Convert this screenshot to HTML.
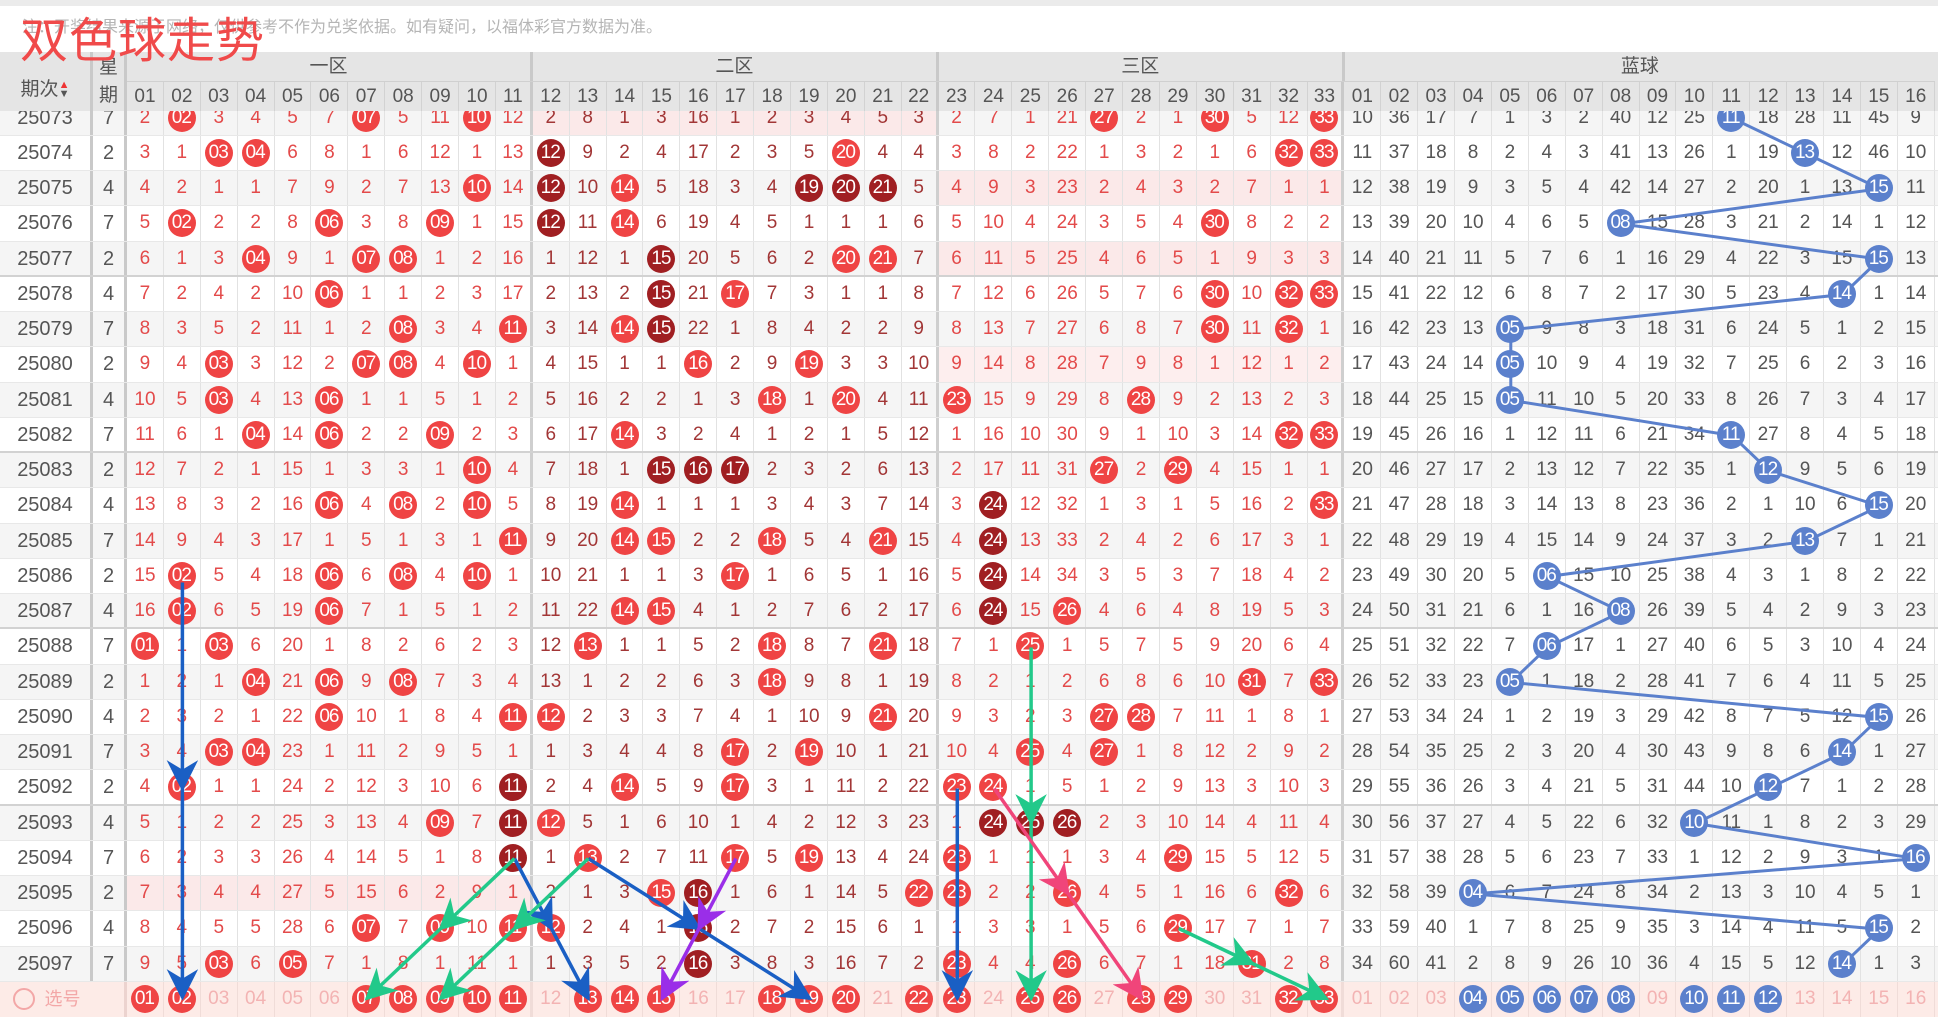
<!DOCTYPE html>
<html><head><meta charset="utf-8">
<style>
*{box-sizing:border-box;margin:0;padding:0}
body{width:1938px;height:1020px;overflow:hidden;position:relative;background:#fff;font-family:"Liberation Sans","Noto Sans CJK SC",sans-serif}
.topbar{position:absolute;left:0;top:0;width:1938px;height:6px;background:#ebebeb}
.note{position:absolute;left:22px;top:8px;height:46px;line-height:40px;font-size:16px;color:#b5b5b5;white-space:nowrap}
.title{position:absolute;left:20px;top:13px;font-size:48px;color:#f04a4a;z-index:20;letter-spacing:1px;font-family:"Liberation Sans","Noto Sans CJK SC",sans-serif;line-height:58px}
.hd{position:absolute;left:0;top:52px;width:1938px;height:59px;background:#e5e5e5;z-index:10;color:#555}
.hd .qc{position:absolute;left:0;top:0;width:93px;height:59px;border-right:3px solid #c9c9c9;text-align:center;line-height:59px;font-size:19px;padding-top:8px}
.hd .qc em{font-style:normal;font-size:11px;line-height:9px;display:inline-block;vertical-align:middle;text-align:center}
.hd .xq{position:absolute;left:93px;top:0;width:34px;height:59px;border-right:3px solid #c9c9c9;text-align:center;font-size:19px;line-height:28px;padding-top:2px}
.hd .zr{position:absolute;left:127px;top:0;height:30px;display:flex;border-bottom:1px solid #d0d0d0}
.hd .zr div{text-align:center;line-height:30px;font-size:19px;border-right:3px solid #c9c9c9}
.hd .nr{position:absolute;left:127px;top:30px;height:29px;display:flex}
.hd .nr span{flex:none;width:36.9px;text-align:center;line-height:29px;font-size:19px;border-right:1px solid #d2d2d2}
.hd .nr span:nth-child(11),.hd .nr span:nth-child(22),.hd .nr span:nth-child(33){border-right:3px solid #c9c9c9}
.rows{position:absolute;left:0;top:100.6px;width:1938px}
.r{display:flex;height:35.26px;background:#fff;border-bottom:1px solid #e8e8e8}
.r.g{background:#f5f5f5}
.r.sep{border-bottom:2px solid #d2d2d2}
.r b,.r s,.r i{flex:none;text-align:center;line-height:34px;font-weight:normal;font-style:normal;text-decoration:none;white-space:nowrap}
.r b{width:93px;font-size:20px;color:#555;border-right:3px solid #c9c9c9}
.r s{width:34px;font-size:20px;color:#555;border-right:3px solid #c9c9c9}
.r i{width:36.9px;font-size:19px;color:#e34a4a;border-right:1px solid #e2e2e2}
.r i:nth-of-type(n+12):nth-of-type(-n+22){color:#a23636}
.r i:nth-of-type(n+34){color:#555}
.r i:nth-of-type(11),.r i:nth-of-type(22),.r i:nth-of-type(33){border-right:3px solid #cfcfcf}
.p1 i:nth-of-type(-n+11),.p2 i:nth-of-type(n+12):nth-of-type(-n+22),.p3 i:nth-of-type(n+23):nth-of-type(-n+33){background:#fdeeee}
.g.p1 i:nth-of-type(-n+11),.g.p2 i:nth-of-type(n+12):nth-of-type(-n+22),.g.p3 i:nth-of-type(n+23):nth-of-type(-n+33){background:#fbe9e9}
u{display:inline-block;width:28px;height:28px;border-radius:50%;background:#ef4444;color:#fff;line-height:28px;font-size:19px;letter-spacing:-1px;text-decoration:none;position:relative;z-index:2;vertical-align:middle;text-indent:-1px}
u.d{background:#a01f22}
u.b{background:#5b80cc}
.last{background:#fdebe7!important;border-bottom:none}
.last i{color:#f3b3b3!important;border-right-color:#f0dcd8!important}
.last b{color:#f3a7a7;font-size:18px;border-right:none}
.last b span{display:inline-block;width:22px;height:22px;border:2px solid #f3a7a7;border-radius:50%;vertical-align:middle;margin-right:10px;margin-top:-3px}
.last s{border-right:3px solid #ecd3cf}
svg{position:absolute;left:0;top:0}
</style></head><body>
<div class="topbar"></div>
<div class="note">注：开奖结果来源于网络，仅供参考不作为兑奖依据。如有疑问，以福体彩官方数据为准。</div>
<div class="title">双色球走势</div>
<div class="hd">
<div class="qc">期次<em><span style="color:#e33">▲</span><br>▼</em></div>
<div class="xq">星<br>期</div>
<div class="zr"><div style="width:405.9px">一区</div><div style="width:405.9px">二区</div><div style="width:405.9px">三区</div><div style="width:590.4px;border-right:none">蓝球</div></div>
<div class="nr"><span>01</span><span>02</span><span>03</span><span>04</span><span>05</span><span>06</span><span>07</span><span>08</span><span>09</span><span>10</span><span>11</span><span>12</span><span>13</span><span>14</span><span>15</span><span>16</span><span>17</span><span>18</span><span>19</span><span>20</span><span>21</span><span>22</span><span>23</span><span>24</span><span>25</span><span>26</span><span>27</span><span>28</span><span>29</span><span>30</span><span>31</span><span>32</span><span>33</span><span>01</span><span>02</span><span>03</span><span>04</span><span>05</span><span>06</span><span>07</span><span>08</span><span>09</span><span>10</span><span>11</span><span>12</span><span>13</span><span>14</span><span>15</span><span>16</span></div>
</div>

<svg width="1938" height="1020" style="z-index:1">
<polyline transform="translate(0,2.5)" fill="none" stroke="#5b80cc" stroke-width="3" points="1732.2,115.7 1806,151 1879.8,186.2 1621.5,221.5 1879.8,256.7 1842.9,292 1510.8,327.3 1510.8,362.5 1510.8,397.8 1732.2,433 1769.1,468.3 1879.8,503.6 1806,538.8 1547.7,574.1 1621.5,609.3 1547.7,644.6 1510.8,679.9 1879.8,715.1 1842.9,750.4 1769.1,785.6 1695.3,820.9 1916.7,856.2 1473.9,891.4 1879.8,926.7 1842.9,961.9"/>
</svg>

<div class="rows">
<div class="r g p2"><b>25073</b><s>7</s><i>2</i><i><u>02</u></i><i>3</i><i>4</i><i>5</i><i>7</i><i><u>07</u></i><i>5</i><i>11</i><i><u>10</u></i><i>12</i><i>2</i><i>8</i><i>1</i><i>3</i><i>16</i><i>1</i><i>2</i><i>3</i><i>4</i><i>5</i><i>3</i><i>2</i><i>7</i><i>1</i><i>21</i><i><u>27</u></i><i>2</i><i>1</i><i><u>30</u></i><i>5</i><i>12</i><i><u>33</u></i><i>10</i><i>36</i><i>17</i><i>7</i><i>1</i><i>3</i><i>2</i><i>40</i><i>12</i><i>25</i><i><u class=b>11</u></i><i>18</i><i>28</i><i>11</i><i>45</i><i>9</i></div>
<div class="r"><b>25074</b><s>2</s><i>3</i><i>1</i><i><u>03</u></i><i><u>04</u></i><i>6</i><i>8</i><i>1</i><i>6</i><i>12</i><i>1</i><i>13</i><i><u class=d>12</u></i><i>9</i><i>2</i><i>4</i><i>17</i><i>2</i><i>3</i><i>5</i><i><u>20</u></i><i>4</i><i>4</i><i>3</i><i>8</i><i>2</i><i>22</i><i>1</i><i>3</i><i>2</i><i>1</i><i>6</i><i><u>32</u></i><i><u>33</u></i><i>11</i><i>37</i><i>18</i><i>8</i><i>2</i><i>4</i><i>3</i><i>41</i><i>13</i><i>26</i><i>1</i><i>19</i><i><u class=b>13</u></i><i>12</i><i>46</i><i>10</i></div>
<div class="r g p3"><b>25075</b><s>4</s><i>4</i><i>2</i><i>1</i><i>1</i><i>7</i><i>9</i><i>2</i><i>7</i><i>13</i><i><u>10</u></i><i>14</i><i><u class=d>12</u></i><i>10</i><i><u>14</u></i><i>5</i><i>18</i><i>3</i><i>4</i><i><u class=d>19</u></i><i><u class=d>20</u></i><i><u class=d>21</u></i><i>5</i><i>4</i><i>9</i><i>3</i><i>23</i><i>2</i><i>4</i><i>3</i><i>2</i><i>7</i><i>1</i><i>1</i><i>12</i><i>38</i><i>19</i><i>9</i><i>3</i><i>5</i><i>4</i><i>42</i><i>14</i><i>27</i><i>2</i><i>20</i><i>1</i><i>13</i><i><u class=b>15</u></i><i>11</i></div>
<div class="r"><b>25076</b><s>7</s><i>5</i><i><u>02</u></i><i>2</i><i>2</i><i>8</i><i><u>06</u></i><i>3</i><i>8</i><i><u>09</u></i><i>1</i><i>15</i><i><u class=d>12</u></i><i>11</i><i><u>14</u></i><i>6</i><i>19</i><i>4</i><i>5</i><i>1</i><i>1</i><i>1</i><i>6</i><i>5</i><i>10</i><i>4</i><i>24</i><i>3</i><i>5</i><i>4</i><i><u>30</u></i><i>8</i><i>2</i><i>2</i><i>13</i><i>39</i><i>20</i><i>10</i><i>4</i><i>6</i><i>5</i><i><u class=b>08</u></i><i>15</i><i>28</i><i>3</i><i>21</i><i>2</i><i>14</i><i>1</i><i>12</i></div>
<div class="r g p3 sep"><b>25077</b><s>2</s><i>6</i><i>1</i><i>3</i><i><u>04</u></i><i>9</i><i>1</i><i><u>07</u></i><i><u>08</u></i><i>1</i><i>2</i><i>16</i><i>1</i><i>12</i><i>1</i><i><u class=d>15</u></i><i>20</i><i>5</i><i>6</i><i>2</i><i><u>20</u></i><i><u>21</u></i><i>7</i><i>6</i><i>11</i><i>5</i><i>25</i><i>4</i><i>6</i><i>5</i><i>1</i><i>9</i><i>3</i><i>3</i><i>14</i><i>40</i><i>21</i><i>11</i><i>5</i><i>7</i><i>6</i><i>1</i><i>16</i><i>29</i><i>4</i><i>22</i><i>3</i><i>15</i><i><u class=b>15</u></i><i>13</i></div>
<div class="r"><b>25078</b><s>4</s><i>7</i><i>2</i><i>4</i><i>2</i><i>10</i><i><u>06</u></i><i>1</i><i>1</i><i>2</i><i>3</i><i>17</i><i>2</i><i>13</i><i>2</i><i><u class=d>15</u></i><i>21</i><i><u>17</u></i><i>7</i><i>3</i><i>1</i><i>1</i><i>8</i><i>7</i><i>12</i><i>6</i><i>26</i><i>5</i><i>7</i><i>6</i><i><u>30</u></i><i>10</i><i><u>32</u></i><i><u>33</u></i><i>15</i><i>41</i><i>22</i><i>12</i><i>6</i><i>8</i><i>7</i><i>2</i><i>17</i><i>30</i><i>5</i><i>23</i><i>4</i><i><u class=b>14</u></i><i>1</i><i>14</i></div>
<div class="r g"><b>25079</b><s>7</s><i>8</i><i>3</i><i>5</i><i>2</i><i>11</i><i>1</i><i>2</i><i><u>08</u></i><i>3</i><i>4</i><i><u>11</u></i><i>3</i><i>14</i><i><u>14</u></i><i><u class=d>15</u></i><i>22</i><i>1</i><i>8</i><i>4</i><i>2</i><i>2</i><i>9</i><i>8</i><i>13</i><i>7</i><i>27</i><i>6</i><i>8</i><i>7</i><i><u>30</u></i><i>11</i><i><u>32</u></i><i>1</i><i>16</i><i>42</i><i>23</i><i>13</i><i><u class=b>05</u></i><i>9</i><i>8</i><i>3</i><i>18</i><i>31</i><i>6</i><i>24</i><i>5</i><i>1</i><i>2</i><i>15</i></div>
<div class="r p3"><b>25080</b><s>2</s><i>9</i><i>4</i><i><u>03</u></i><i>3</i><i>12</i><i>2</i><i><u>07</u></i><i><u>08</u></i><i>4</i><i><u>10</u></i><i>1</i><i>4</i><i>15</i><i>1</i><i>1</i><i><u>16</u></i><i>2</i><i>9</i><i><u>19</u></i><i>3</i><i>3</i><i>10</i><i>9</i><i>14</i><i>8</i><i>28</i><i>7</i><i>9</i><i>8</i><i>1</i><i>12</i><i>1</i><i>2</i><i>17</i><i>43</i><i>24</i><i>14</i><i><u class=b>05</u></i><i>10</i><i>9</i><i>4</i><i>19</i><i>32</i><i>7</i><i>25</i><i>6</i><i>2</i><i>3</i><i>16</i></div>
<div class="r g"><b>25081</b><s>4</s><i>10</i><i>5</i><i><u>03</u></i><i>4</i><i>13</i><i><u>06</u></i><i>1</i><i>1</i><i>5</i><i>1</i><i>2</i><i>5</i><i>16</i><i>2</i><i>2</i><i>1</i><i>3</i><i><u>18</u></i><i>1</i><i><u>20</u></i><i>4</i><i>11</i><i><u>23</u></i><i>15</i><i>9</i><i>29</i><i>8</i><i><u>28</u></i><i>9</i><i>2</i><i>13</i><i>2</i><i>3</i><i>18</i><i>44</i><i>25</i><i>15</i><i><u class=b>05</u></i><i>11</i><i>10</i><i>5</i><i>20</i><i>33</i><i>8</i><i>26</i><i>7</i><i>3</i><i>4</i><i>17</i></div>
<div class="r sep"><b>25082</b><s>7</s><i>11</i><i>6</i><i>1</i><i><u>04</u></i><i>14</i><i><u>06</u></i><i>2</i><i>2</i><i><u>09</u></i><i>2</i><i>3</i><i>6</i><i>17</i><i><u>14</u></i><i>3</i><i>2</i><i>4</i><i>1</i><i>2</i><i>1</i><i>5</i><i>12</i><i>1</i><i>16</i><i>10</i><i>30</i><i>9</i><i>1</i><i>10</i><i>3</i><i>14</i><i><u>32</u></i><i><u>33</u></i><i>19</i><i>45</i><i>26</i><i>16</i><i>1</i><i>12</i><i>11</i><i>6</i><i>21</i><i>34</i><i><u class=b>11</u></i><i>27</i><i>8</i><i>4</i><i>5</i><i>18</i></div>
<div class="r g"><b>25083</b><s>2</s><i>12</i><i>7</i><i>2</i><i>1</i><i>15</i><i>1</i><i>3</i><i>3</i><i>1</i><i><u>10</u></i><i>4</i><i>7</i><i>18</i><i>1</i><i><u class=d>15</u></i><i><u class=d>16</u></i><i><u class=d>17</u></i><i>2</i><i>3</i><i>2</i><i>6</i><i>13</i><i>2</i><i>17</i><i>11</i><i>31</i><i><u>27</u></i><i>2</i><i><u>29</u></i><i>4</i><i>15</i><i>1</i><i>1</i><i>20</i><i>46</i><i>27</i><i>17</i><i>2</i><i>13</i><i>12</i><i>7</i><i>22</i><i>35</i><i>1</i><i><u class=b>12</u></i><i>9</i><i>5</i><i>6</i><i>19</i></div>
<div class="r"><b>25084</b><s>4</s><i>13</i><i>8</i><i>3</i><i>2</i><i>16</i><i><u>06</u></i><i>4</i><i><u>08</u></i><i>2</i><i><u>10</u></i><i>5</i><i>8</i><i>19</i><i><u>14</u></i><i>1</i><i>1</i><i>1</i><i>3</i><i>4</i><i>3</i><i>7</i><i>14</i><i>3</i><i><u class=d>24</u></i><i>12</i><i>32</i><i>1</i><i>3</i><i>1</i><i>5</i><i>16</i><i>2</i><i><u>33</u></i><i>21</i><i>47</i><i>28</i><i>18</i><i>3</i><i>14</i><i>13</i><i>8</i><i>23</i><i>36</i><i>2</i><i>1</i><i>10</i><i>6</i><i><u class=b>15</u></i><i>20</i></div>
<div class="r g"><b>25085</b><s>7</s><i>14</i><i>9</i><i>4</i><i>3</i><i>17</i><i>1</i><i>5</i><i>1</i><i>3</i><i>1</i><i><u>11</u></i><i>9</i><i>20</i><i><u>14</u></i><i><u>15</u></i><i>2</i><i>2</i><i><u>18</u></i><i>5</i><i>4</i><i><u>21</u></i><i>15</i><i>4</i><i><u class=d>24</u></i><i>13</i><i>33</i><i>2</i><i>4</i><i>2</i><i>6</i><i>17</i><i>3</i><i>1</i><i>22</i><i>48</i><i>29</i><i>19</i><i>4</i><i>15</i><i>14</i><i>9</i><i>24</i><i>37</i><i>3</i><i>2</i><i><u class=b>13</u></i><i>7</i><i>1</i><i>21</i></div>
<div class="r"><b>25086</b><s>2</s><i>15</i><i><u>02</u></i><i>5</i><i>4</i><i>18</i><i><u>06</u></i><i>6</i><i><u>08</u></i><i>4</i><i><u>10</u></i><i>1</i><i>10</i><i>21</i><i>1</i><i>1</i><i>3</i><i><u>17</u></i><i>1</i><i>6</i><i>5</i><i>1</i><i>16</i><i>5</i><i><u class=d>24</u></i><i>14</i><i>34</i><i>3</i><i>5</i><i>3</i><i>7</i><i>18</i><i>4</i><i>2</i><i>23</i><i>49</i><i>30</i><i>20</i><i>5</i><i><u class=b>06</u></i><i>15</i><i>10</i><i>25</i><i>38</i><i>4</i><i>3</i><i>1</i><i>8</i><i>2</i><i>22</i></div>
<div class="r g sep"><b>25087</b><s>4</s><i>16</i><i><u>02</u></i><i>6</i><i>5</i><i>19</i><i><u>06</u></i><i>7</i><i>1</i><i>5</i><i>1</i><i>2</i><i>11</i><i>22</i><i><u>14</u></i><i><u>15</u></i><i>4</i><i>1</i><i>2</i><i>7</i><i>6</i><i>2</i><i>17</i><i>6</i><i><u class=d>24</u></i><i>15</i><i><u>26</u></i><i>4</i><i>6</i><i>4</i><i>8</i><i>19</i><i>5</i><i>3</i><i>24</i><i>50</i><i>31</i><i>21</i><i>6</i><i>1</i><i>16</i><i><u class=b>08</u></i><i>26</i><i>39</i><i>5</i><i>4</i><i>2</i><i>9</i><i>3</i><i>23</i></div>
<div class="r"><b>25088</b><s>7</s><i><u>01</u></i><i>1</i><i><u>03</u></i><i>6</i><i>20</i><i>1</i><i>8</i><i>2</i><i>6</i><i>2</i><i>3</i><i>12</i><i><u>13</u></i><i>1</i><i>1</i><i>5</i><i>2</i><i><u>18</u></i><i>8</i><i>7</i><i><u>21</u></i><i>18</i><i>7</i><i>1</i><i><u>25</u></i><i>1</i><i>5</i><i>7</i><i>5</i><i>9</i><i>20</i><i>6</i><i>4</i><i>25</i><i>51</i><i>32</i><i>22</i><i>7</i><i><u class=b>06</u></i><i>17</i><i>1</i><i>27</i><i>40</i><i>6</i><i>5</i><i>3</i><i>10</i><i>4</i><i>24</i></div>
<div class="r g"><b>25089</b><s>2</s><i>1</i><i>2</i><i>1</i><i><u>04</u></i><i>21</i><i><u>06</u></i><i>9</i><i><u>08</u></i><i>7</i><i>3</i><i>4</i><i>13</i><i>1</i><i>2</i><i>2</i><i>6</i><i>3</i><i><u>18</u></i><i>9</i><i>8</i><i>1</i><i>19</i><i>8</i><i>2</i><i>1</i><i>2</i><i>6</i><i>8</i><i>6</i><i>10</i><i><u>31</u></i><i>7</i><i><u>33</u></i><i>26</i><i>52</i><i>33</i><i>23</i><i><u class=b>05</u></i><i>1</i><i>18</i><i>2</i><i>28</i><i>41</i><i>7</i><i>6</i><i>4</i><i>11</i><i>5</i><i>25</i></div>
<div class="r"><b>25090</b><s>4</s><i>2</i><i>3</i><i>2</i><i>1</i><i>22</i><i><u>06</u></i><i>10</i><i>1</i><i>8</i><i>4</i><i><u>11</u></i><i><u>12</u></i><i>2</i><i>3</i><i>3</i><i>7</i><i>4</i><i>1</i><i>10</i><i>9</i><i><u>21</u></i><i>20</i><i>9</i><i>3</i><i>2</i><i>3</i><i><u>27</u></i><i><u>28</u></i><i>7</i><i>11</i><i>1</i><i>8</i><i>1</i><i>27</i><i>53</i><i>34</i><i>24</i><i>1</i><i>2</i><i>19</i><i>3</i><i>29</i><i>42</i><i>8</i><i>7</i><i>5</i><i>12</i><i><u class=b>15</u></i><i>26</i></div>
<div class="r g"><b>25091</b><s>7</s><i>3</i><i>4</i><i><u>03</u></i><i><u>04</u></i><i>23</i><i>1</i><i>11</i><i>2</i><i>9</i><i>5</i><i>1</i><i>1</i><i>3</i><i>4</i><i>4</i><i>8</i><i><u>17</u></i><i>2</i><i><u>19</u></i><i>10</i><i>1</i><i>21</i><i>10</i><i>4</i><i><u>25</u></i><i>4</i><i><u>27</u></i><i>1</i><i>8</i><i>12</i><i>2</i><i>9</i><i>2</i><i>28</i><i>54</i><i>35</i><i>25</i><i>2</i><i>3</i><i>20</i><i>4</i><i>30</i><i>43</i><i>9</i><i>8</i><i>6</i><i><u class=b>14</u></i><i>1</i><i>27</i></div>
<div class="r sep"><b>25092</b><s>2</s><i>4</i><i><u>02</u></i><i>1</i><i>1</i><i>24</i><i>2</i><i>12</i><i>3</i><i>10</i><i>6</i><i><u class=d>11</u></i><i>2</i><i>4</i><i><u>14</u></i><i>5</i><i>9</i><i><u>17</u></i><i>3</i><i>1</i><i>11</i><i>2</i><i>22</i><i><u>23</u></i><i><u>24</u></i><i>1</i><i>5</i><i>1</i><i>2</i><i>9</i><i>13</i><i>3</i><i>10</i><i>3</i><i>29</i><i>55</i><i>36</i><i>26</i><i>3</i><i>4</i><i>21</i><i>5</i><i>31</i><i>44</i><i>10</i><i><u class=b>12</u></i><i>7</i><i>1</i><i>2</i><i>28</i></div>
<div class="r g"><b>25093</b><s>4</s><i>5</i><i>1</i><i>2</i><i>2</i><i>25</i><i>3</i><i>13</i><i>4</i><i><u>09</u></i><i>7</i><i><u class=d>11</u></i><i><u>12</u></i><i>5</i><i>1</i><i>6</i><i>10</i><i>1</i><i>4</i><i>2</i><i>12</i><i>3</i><i>23</i><i>1</i><i><u class=d>24</u></i><i><u class=d>25</u></i><i><u class=d>26</u></i><i>2</i><i>3</i><i>10</i><i>14</i><i>4</i><i>11</i><i>4</i><i>30</i><i>56</i><i>37</i><i>27</i><i>4</i><i>5</i><i>22</i><i>6</i><i>32</i><i><u class=b>10</u></i><i>11</i><i>1</i><i>8</i><i>2</i><i>3</i><i>29</i></div>
<div class="r"><b>25094</b><s>7</s><i>6</i><i>2</i><i>3</i><i>3</i><i>26</i><i>4</i><i>14</i><i>5</i><i>1</i><i>8</i><i><u class=d>11</u></i><i>1</i><i><u>13</u></i><i>2</i><i>7</i><i>11</i><i><u>17</u></i><i>5</i><i><u>19</u></i><i>13</i><i>4</i><i>24</i><i><u>23</u></i><i>1</i><i>1</i><i>1</i><i>3</i><i>4</i><i><u>29</u></i><i>15</i><i>5</i><i>12</i><i>5</i><i>31</i><i>57</i><i>38</i><i>28</i><i>5</i><i>6</i><i>23</i><i>7</i><i>33</i><i>1</i><i>12</i><i>2</i><i>9</i><i>3</i><i>1</i><i><u class=b>16</u></i></div>
<div class="r g p1"><b>25095</b><s>2</s><i>7</i><i>3</i><i>4</i><i>4</i><i>27</i><i>5</i><i>15</i><i>6</i><i>2</i><i>9</i><i>1</i><i>2</i><i>1</i><i>3</i><i><u>15</u></i><i><u class=d>16</u></i><i>1</i><i>6</i><i>1</i><i>14</i><i>5</i><i><u>22</u></i><i><u>23</u></i><i>2</i><i>2</i><i><u>26</u></i><i>4</i><i>5</i><i>1</i><i>16</i><i>6</i><i><u>32</u></i><i>6</i><i>32</i><i>58</i><i>39</i><i><u class=b>04</u></i><i>6</i><i>7</i><i>24</i><i>8</i><i>34</i><i>2</i><i>13</i><i>3</i><i>10</i><i>4</i><i>5</i><i>1</i></div>
<div class="r"><b>25096</b><s>4</s><i>8</i><i>4</i><i>5</i><i>5</i><i>28</i><i>6</i><i><u>07</u></i><i>7</i><i><u>09</u></i><i>10</i><i><u>11</u></i><i><u>12</u></i><i>2</i><i>4</i><i>1</i><i><u class=d>16</u></i><i>2</i><i>7</i><i>2</i><i>15</i><i>6</i><i>1</i><i>1</i><i>3</i><i>3</i><i>1</i><i>5</i><i>6</i><i><u>29</u></i><i>17</i><i>7</i><i>1</i><i>7</i><i>33</i><i>59</i><i>40</i><i>1</i><i>7</i><i>8</i><i>25</i><i>9</i><i>35</i><i>3</i><i>14</i><i>4</i><i>11</i><i>5</i><i><u class=b>15</u></i><i>2</i></div>
<div class="r g"><b>25097</b><s>7</s><i>9</i><i>5</i><i><u>03</u></i><i>6</i><i><u>05</u></i><i>7</i><i>1</i><i>8</i><i>1</i><i>11</i><i>1</i><i>1</i><i>3</i><i>5</i><i>2</i><i><u class=d>16</u></i><i>3</i><i>8</i><i>3</i><i>16</i><i>7</i><i>2</i><i><u>23</u></i><i>4</i><i>4</i><i><u>26</u></i><i>6</i><i>7</i><i>1</i><i>18</i><i><u>31</u></i><i>2</i><i>8</i><i>34</i><i>60</i><i>41</i><i>2</i><i>8</i><i>9</i><i>26</i><i>10</i><i>36</i><i>4</i><i>15</i><i>5</i><i>12</i><i><u class=b>14</u></i><i>1</i><i>3</i></div>
<div class="r last"><b><span></span>选号</b><s></s><i><u>01</u></i><i><u>02</u></i><i>03</i><i>04</i><i>05</i><i>06</i><i><u>07</u></i><i><u>08</u></i><i><u>09</u></i><i><u>10</u></i><i><u>11</u></i><i>12</i><i><u>13</u></i><i><u>14</u></i><i><u>15</u></i><i>16</i><i>17</i><i><u>18</u></i><i><u>19</u></i><i><u>20</u></i><i>21</i><i><u>22</u></i><i><u>23</u></i><i>24</i><i><u>25</u></i><i><u>26</u></i><i>27</i><i><u>28</u></i><i><u>29</u></i><i>30</i><i>31</i><i><u>32</u></i><i><u>33</u></i><i>01</i><i>02</i><i>03</i><i><u class=b>04</u></i><i><u class=b>05</u></i><i><u class=b>06</u></i><i><u class=b>07</u></i><i><u class=b>08</u></i><i>09</i><i><u class=b>10</u></i><i><u class=b>11</u></i><i><u class=b>12</u></i><i>13</i><i>14</i><i>15</i><i>16</i></div>
</div>

<svg width="1938" height="1020" style="z-index:5">
<defs>
<marker id="mb2" viewBox="0 0 10 10" refX="9" refY="5" markerWidth="9" markerHeight="9" orient="auto"><path d="M0,0 L10,5 L0,10 L3,5 z" fill="#1a5fc4"/></marker>
<marker id="mg" viewBox="0 0 10 10" refX="9" refY="5" markerWidth="9" markerHeight="9" orient="auto"><path d="M0,0 L10,5 L0,10 L3,5 z" fill="#22c98a"/></marker>
<marker id="mp" viewBox="0 0 10 10" refX="9" refY="5" markerWidth="9" markerHeight="9" orient="auto"><path d="M0,0 L10,5 L0,10 L3,5 z" fill="#f0457a"/></marker>
<marker id="mv" viewBox="0 0 10 10" refX="9" refY="5" markerWidth="9" markerHeight="9" orient="auto"><path d="M0,0 L10,5 L0,10 L3,5 z" fill="#9a2ee8"/></marker>
</defs>
<g stroke-width="3.5" fill="none" transform="translate(0,2.5)">
<g stroke="#1a5fc4">
<line x1="182.4" y1="580" x2="182.4" y2="786" marker-end="url(#mb2)"/>
<line x1="182.4" y1="786" x2="182.4" y2="995" marker-end="url(#mb2)"/>
<line x1="514.5" y1="856" x2="551.4" y2="926" marker-end="url(#mb2)"/>
<line x1="551.4" y1="926" x2="588.3" y2="996" marker-end="url(#mb2)"/>
<line x1="588.3" y1="856" x2="699" y2="926" marker-end="url(#mb2)"/>
<line x1="699" y1="926" x2="809.7" y2="996" marker-end="url(#mb2)"/>
<line x1="957.3" y1="786" x2="957.3" y2="996" marker-end="url(#mb2)"/>
</g>
<g stroke="#22c98a">
<line x1="514.5" y1="856" x2="440.7" y2="926" marker-end="url(#mg)"/>
<line x1="440.7" y1="926" x2="366.9" y2="996" marker-end="url(#mg)"/>
<line x1="588.3" y1="856" x2="514.5" y2="926" marker-end="url(#mg)"/>
<line x1="514.5" y1="926" x2="440.7" y2="996" marker-end="url(#mg)"/>
<line x1="1031.1" y1="645" x2="1031.1" y2="820" marker-end="url(#mg)"/>
<line x1="1031.1" y1="820" x2="1031.1" y2="996" marker-end="url(#mg)"/>
<line x1="1178.7" y1="926" x2="1252.5" y2="961" marker-end="url(#mg)"/>
<line x1="1252.5" y1="961" x2="1326.3" y2="996" marker-end="url(#mg)"/>
</g>
<g stroke="#f0457a">
<line x1="994.2" y1="786" x2="1068" y2="891" marker-end="url(#mp)"/>
<line x1="1068" y1="891" x2="1141.8" y2="996" marker-end="url(#mp)"/>
</g>
<g stroke="#9a2ee8">
<line x1="735.9" y1="856" x2="699" y2="926" marker-end="url(#mv)"/>
<line x1="699" y1="926" x2="662.1" y2="996" marker-end="url(#mv)"/>
</g>
</g>
</svg>
</body></html>
